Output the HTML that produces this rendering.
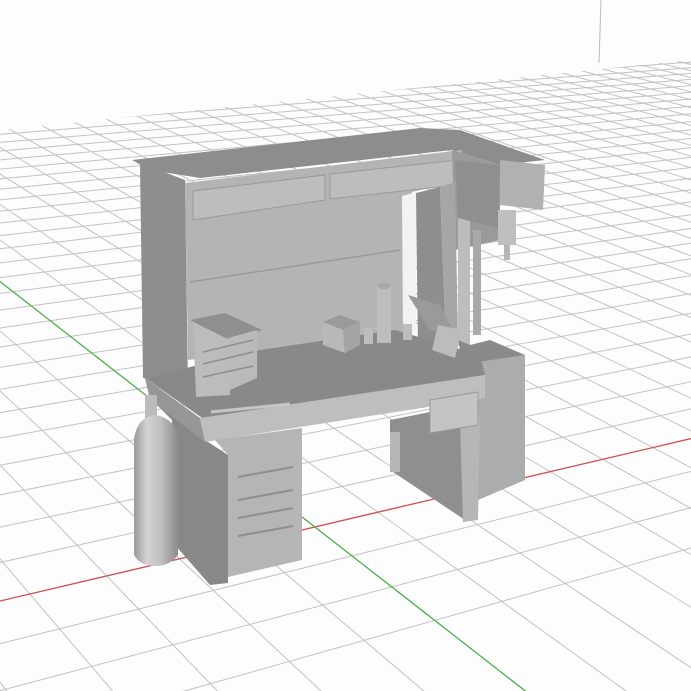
<!DOCTYPE html>
<html><head><meta charset="utf-8"><style>
html,body{margin:0;padding:0;background:#fdfdfd;width:691px;height:691px;overflow:hidden}
svg{display:block;position:absolute;left:0;top:0}
</style></head><body>
<svg id="s" width="691" height="691" viewBox="0 0 691 691" xmlns="http://www.w3.org/2000/svg">
<defs>
<clipPath id="gc"><polygon points="0,130 691,60 691,691 0,691"/></clipPath>
<linearGradient id="tank" x1="0" x2="1" y1="0" y2="0">
<stop offset="0" stop-color="#9a9a9a"/><stop offset="0.3" stop-color="#d4d4d4"/><stop offset="0.6" stop-color="#c0c0c0"/><stop offset="1" stop-color="#8c8c8c"/></linearGradient>
</defs>
<rect width="691" height="691" fill="#fdfdfd"/>
<g id="grid" clip-path="url(#gc)" stroke="#c2c2c2" stroke-width="1" fill="none"></g>
<line x1="601" y1="0" x2="599" y2="63" stroke="#bcbcbc" stroke-width="1"/>
<g id="axes" clip-path="url(#gc)"></g>

<polygon points="132,160 420,128 460,130 452,150 200,178 150,170" fill="#8d8d8d"/>
<polygon points="452,150 460,130 545,160 500,165" fill="#8d8d8d"/>
<polygon points="140,163 185,180 188,390 143,378" fill="#8e8e8e"/>
<polygon points="185,183 462,150 462,180 412,192 410,333 188,360" fill="#b4b4b4"/>
<line x1="190" y1="282" x2="400" y2="250" stroke="#9a9a9a" stroke-width="1.5"/>
<polygon points="193,191 325,175 325,200 193,220" fill="#bdbdbd" stroke="#999" stroke-width="1"/>
<polygon points="330,174 457,160 457,185 330,199" fill="#bdbdbd" stroke="#999" stroke-width="1"/>
<polygon points="402,196 416,192 416,330 403,333" fill="#f2f2f2"/>
<polygon points="452,150 500,165 500,240 455,250" fill="#9a9a9a"/>
<polygon points="416,193 440,187 446,345 418,352" fill="#8e8e8e"/>
<polygon points="440,187 455,182 458,340 446,345" fill="#a6a6a6"/>
<rect x="458" y="205" width="12" height="140" fill="#bdbdbd"/>
<rect x="473" y="230" width="8" height="105" fill="#a9a9a9"/>
<polygon points="455,160 500,165 498,228 458,218" fill="#8f8f8f"/>
<polygon points="500,160 545,165 543,210 500,205" fill="#b1b1b1"/>
<rect x="498" y="210" width="18" height="35" fill="#bfbfbf"/>
<rect x="504" y="245" width="6" height="15" fill="#b5b5b5"/>
<polygon points="458,340 470,345 490,340 525,355 480,365 462,360" fill="#8a8a8a"/>
<polygon points="478,362 525,355 525,480 478,500" fill="#acacac"/>
<polygon points="390,420 465,405 465,520 390,470" fill="#8f8f8f"/>
<rect x="390" y="432" width="10" height="40" fill="#b6b6b6"/>
<polygon points="460,420 480,415 478,520 463,522" fill="#b6b6b6"/>
<polygon points="150,398 205,440 228,455 228,583 210,585 175,545 172,420" fill="#888"/>
<polygon points="145,378 260,350 395,330 480,355 485,375 205,420" fill="#898989"/>
<polygon points="200,418 485,375 485,398 205,442" fill="#bebebe"/>
<polygon points="145,378 200,418 205,442 150,400" fill="#969696"/>
<polygon points="430,400 478,392 478,425 430,433" fill="#c4c4c4" stroke="#999" stroke-width="1"/>
<polygon points="215,440 302,428 302,560 228,577 228,455" fill="#b5b5b5"/>
<g stroke="#8e8e8e" stroke-width="2"><line x1="238" y1="477" x2="293" y2="467"/><line x1="238" y1="500" x2="293" y2="490"/><line x1="238" y1="518" x2="293" y2="508"/><line x1="238" y1="536" x2="293" y2="526"/></g>
<polygon points="190,320 225,313 262,330 228,340" fill="#8f8f8f"/>
<polygon points="228,338 257,330 257,378 230,390" fill="#bababa"/>
<polygon points="193,322 230,340 230,395 196,397" fill="#bcbcbc"/>
<g stroke="#8e8e8e" stroke-width="1.5"><line x1="203" y1="352" x2="253" y2="340"/><line x1="203" y1="364" x2="253" y2="352"/><line x1="203" y1="377" x2="253" y2="366"/></g>
<polygon points="323,322 340,315 360,322 343,330" fill="#9a9a9a"/>
<polygon points="323,322 343,330 345,353 323,345" fill="#b9b9b9"/>
<polygon points="343,330 360,322 360,345 345,353" fill="#a4a4a4"/>
<rect x="377" y="285" width="14" height="58" fill="#bdbdbd"/><ellipse cx="384" cy="286" rx="7" ry="3" fill="#a8a8a8"/>
<rect x="364" y="328" width="9" height="16" fill="#bdbdbd"/>
<rect x="403" y="324" width="9" height="16" fill="#bdbdbd"/>
<polygon points="408,295 440,305 455,335 430,330" fill="#9a9a9a"/>
<polygon points="438,325 462,330 455,358 432,350" fill="#bcbcbc"/>
<line x1="211" y1="412" x2="290" y2="404" stroke="#c6c6c6" stroke-width="3"/>
<rect x="145" y="395" width="12" height="25" fill="#bcbcbc"/>
<path d="M134,440 Q136,418 155,415 Q176,418 178,440 L178,555 Q170,566 155,566 Q140,566 134,555 Z" fill="url(#tank)"/>
</svg>
<script>
(function(){
var g=0.024,a=72,d=-2.5,h=0.035,b=-24.7,e=-9.4,cx=315,cy=527;
function P(u,v){var w=g*u+h*v+1;return [(a*u+b*v+cx)/w,(d*u+e*v+cy)/w];}
var ns="http://www.w3.org/2000/svg",G=document.getElementById('grid'),A=document.getElementById('axes');
function ln(p,q,par,col,sw){var l=document.createElementNS(ns,'line');l.setAttribute('x1',p[0].toFixed(1));l.setAttribute('y1',p[1].toFixed(1));l.setAttribute('x2',q[0].toFixed(1));l.setAttribute('y2',q[1].toFixed(1));if(col){l.setAttribute('stroke',col);l.setAttribute('stroke-width',sw);}par.appendChild(l);}
var vmin=-24,vmax=60,umin=-36,umax=150;
for(var v=vmin;v<=vmax;v++){ln(P(umin,v),P(umax,v),G);}
for(var u=umin;u<=umax;u++){ln(P(u,vmin),P(u,vmax),G);}
ln(P(umin,0),P(umax,0),A,'#d05050',1.3);
ln(P(0,vmin),P(0,vmax),A,'#50b050',1.3);
})();
</script>
</body></html>
